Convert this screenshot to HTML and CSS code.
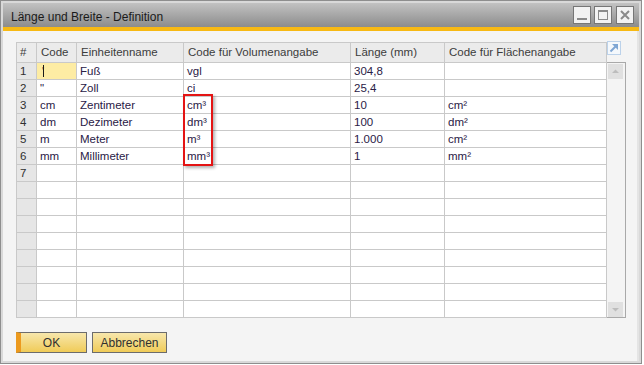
FILE: index.html
```html
<!DOCTYPE html>
<html lang="de">
<head>
    <meta charset="UTF-8">
    <link rel="stylesheet" href="styles.css">
    <title>Länge und Breite - Definition</title>
</head>
<body>
<div class="fenster">
    <div class="titelleiste">
        <span class="titel">Länge und Breite - Definition</span>
        <div class="fensterknoepfe">
            <span class="fknopf"><svg width="16" height="16" viewBox="0 0 16 16"><rect x="3" y="11" width="10" height="2" fill="#8a8a8a"/></svg></span>
            <span class="fknopf"><svg width="16" height="16" viewBox="0 0 16 16"><rect x="3.5" y="3.5" width="9" height="9" fill="none" stroke="#8a8a8a"/><rect x="3" y="3" width="10" height="2" fill="#8a8a8a"/></svg></span>
            <span class="fknopf"><svg width="16" height="16" viewBox="0 0 16 16"><path d="M4 4 L12 12 M12 4 L4 12" stroke="#8a8a8a" stroke-width="2"/></svg></span>
        </div>
    </div>

    <div class="inhalt">
        <div class="tabellenbereich">
            <div class="tabellenrahmen">
                <div class="tabelle">
                    <div class="zeile kopf">
                        <div class="z">#</div><div class="z">Code</div><div class="z">Einheitenname</div><div class="z">Code für Volumenangabe</div><div class="z">Länge (mm)</div><div class="z">Code für Flächenangabe</div>
                    </div>
                    <div class="zeile">
                        <div class="z nr">1</div><div class="z aktiv">'<span class="cursor"></span></div><div class="z">Fuß</div><div class="z">vgl</div><div class="z">304,8</div><div class="z"></div>
                    </div>
                    <div class="zeile">
                        <div class="z nr">2</div><div class="z">"</div><div class="z">Zoll</div><div class="z">ci</div><div class="z">25,4</div><div class="z"></div>
                    </div>
                    <div class="zeile">
                        <div class="z nr">3</div><div class="z">cm</div><div class="z">Zentimeter</div><div class="z">cm³</div><div class="z">10</div><div class="z">cm²</div>
                    </div>
                    <div class="zeile">
                        <div class="z nr">4</div><div class="z">dm</div><div class="z">Dezimeter</div><div class="z">dm³</div><div class="z">100</div><div class="z">dm²</div>
                    </div>
                    <div class="zeile">
                        <div class="z nr">5</div><div class="z">m</div><div class="z">Meter</div><div class="z">m³</div><div class="z">1.000</div><div class="z">cm²</div>
                    </div>
                    <div class="zeile">
                        <div class="z nr">6</div><div class="z">mm</div><div class="z">Millimeter</div><div class="z">mm³</div><div class="z">1</div><div class="z">mm²</div>
                    </div>
                    <div class="zeile">
                        <div class="z nr">7</div><div class="z"></div><div class="z"></div><div class="z"></div><div class="z"></div><div class="z"></div>
                    </div>
                    <div class="zeile">
                        <div class="z nr"></div><div class="z"></div><div class="z"></div><div class="z"></div><div class="z"></div><div class="z"></div>
                    </div>
                    <div class="zeile">
                        <div class="z nr"></div><div class="z"></div><div class="z"></div><div class="z"></div><div class="z"></div><div class="z"></div>
                    </div>
                    <div class="zeile">
                        <div class="z nr"></div><div class="z"></div><div class="z"></div><div class="z"></div><div class="z"></div><div class="z"></div>
                    </div>
                    <div class="zeile">
                        <div class="z nr"></div><div class="z"></div><div class="z"></div><div class="z"></div><div class="z"></div><div class="z"></div>
                    </div>
                    <div class="zeile">
                        <div class="z nr"></div><div class="z"></div><div class="z"></div><div class="z"></div><div class="z"></div><div class="z"></div>
                    </div>
                    <div class="zeile">
                        <div class="z nr"></div><div class="z"></div><div class="z"></div><div class="z"></div><div class="z"></div><div class="z"></div>
                    </div>
                    <div class="zeile">
                        <div class="z nr"></div><div class="z"></div><div class="z"></div><div class="z"></div><div class="z"></div><div class="z"></div>
                    </div>
                    <div class="zeile">
                        <div class="z nr"></div><div class="z"></div><div class="z"></div><div class="z"></div><div class="z"></div><div class="z"></div>
                    </div>
                </div>
                <!-- Markierung der Volumencodes -->
                <div class="markierung"></div>
            </div>

            <div class="seitenleiste">
                <span class="erweitern"><svg width="14" height="14" viewBox="0 0 14 14"><rect x="0.5" y="0.5" width="13" height="13" fill="#f4f8fc" stroke="#bcd2ea"/><path d="M3.5 10.5 L10 4" stroke="#7ea6d4" stroke-width="2"/><path d="M5 3 L11 3 L11 9 Z" fill="#7ea6d4"/></svg></span>
                <div class="bildlauf">
                    <span class="pfeil"><svg width="15" height="15" viewBox="0 0 15 15"><path d="M4 9 L11 9 L7.5 5.5 Z" fill="#bdbdbd"/></svg></span>
                    <span class="pfeil"><svg width="15" height="15" viewBox="0 0 15 15"><path d="M4 6 L11 6 L7.5 9.5 Z" fill="#bdbdbd"/></svg></span>
                </div>
            </div>
        </div>

        <div class="knopfzeile">
            <button class="knopf ok">OK</button>
            <button class="knopf abbrechen">Abbrechen</button>
        </div>
    </div>
</div>
</body>
</html>
```

FILE: styles.css
```css
body {
    margin: 0;
    background: #ffffff;
    font-family: "Liberation Sans", Arial, sans-serif;
}

.fenster {
    width: 642px;
    height: 364px;
    box-sizing: border-box;
    border: 1px solid #8e8e8e;
    padding: 2px;
    background: #d9d9d9;
    display: flex;
    flex-direction: column;
}

.titelleiste {
    height: 24px;
    border-bottom: 4px solid #f7b914;
    background: linear-gradient(#c2c2c2, #8c8c8c);
    display: flex;
    align-items: flex-start;
    justify-content: space-between;
    padding: 0 5px 0 8px;
}

.titel {
    font-size: 12px;
    color: #1a1a1a;
    line-height: 24px;
    padding-top: 2px;
}

.fensterknoepfe {
    display: flex;
    gap: 3px;
    margin-top: 3px;
}

.fknopf {
    width: 16px;
    height: 16px;
    border: 1px solid #767676;
    background: #f2f2f2;
    display: block;
}

.fknopf svg {
    display: block;
}

.fknopf:last-child {
    margin-left: 1px;
}

.inhalt {
    flex: 1;
    background: #f4f4f4;
    border-right: 2px solid #e4e4e4;
    padding: 11px 0 0 13px;
}

.tabellenbereich {
    display: flex;
    align-items: flex-start;
}

.tabellenrahmen {
    position: relative;
}

.tabelle {
    display: grid;
    grid-template-columns: 19px 39px 106px 166px 93px 161px;
    grid-template-rows: 19px repeat(15, 16px);
    gap: 1px;
    background: #c9c9c9;
    border: 1px solid #c9c9c9;
    font-size: 11.5px;
}

.zeile {
    display: contents;
}

.z {
    background: #ffffff;
    color: #2a2046;
    padding-left: 3px;
    line-height: 16px;
    white-space: nowrap;
    overflow: hidden;
}

.kopf .z {
    background: #ebebeb;
    color: #3c3c3c;
    line-height: 19px;
    padding-left: 4px;
}

.kopf .z:first-child {
    padding-left: 3px;
}

.z.nr {
    background: #e6e6e6;
    color: #303030;
}

.z.aktiv {
    background: #fdeca4;
    padding-left: 5px;
}

.cursor {
    display: inline-block;
    width: 1px;
    height: 12px;
    background: #1a1a1a;
    vertical-align: -2px;
    margin-left: -1px;
}

.markierung {
    position: absolute;
    left: 167px;
    top: 52px;
    width: 26px;
    height: 68px;
    border: 2px solid #e41414;
    box-shadow: 2px 2px 3px rgba(0, 0, 0, 0.3);
}

.seitenleiste {
    display: flex;
    flex-direction: column;
}

.erweitern {
    display: block;
    margin-top: -1px;
    height: 14px;
}

.erweitern svg {
    display: block;
}

.bildlauf {
    margin-top: 7px;
    width: 17px;
    border: 1px solid #a9a9a9;
    border-left: none;
    display: flex;
    flex-direction: column;
    justify-content: space-between;
    padding: 1px 0 0 1px;
    height: 253px;
}

.pfeil {
    display: block;
    width: 15px;
    height: 15px;
    background: #e0e0e0;
}

.pfeil svg {
    display: block;
}

.knopfzeile {
    display: flex;
    gap: 5px;
    margin-top: 14px;
}

.knopf {
    height: 21px;
    box-sizing: border-box;
    border: 1px solid #6c6c6c;
    background: linear-gradient(#f7e7ac, #f0cb58);
    font-family: "Liberation Sans", Arial, sans-serif;
    font-size: 12px;
    color: #303030;
    padding: 0;
    margin: 0;
}

.ok {
    width: 71px;
    border-left: 5px solid #ec9a1e;
    padding-right: 4px;
}

.abbrechen {
    width: 75px;
}
```
